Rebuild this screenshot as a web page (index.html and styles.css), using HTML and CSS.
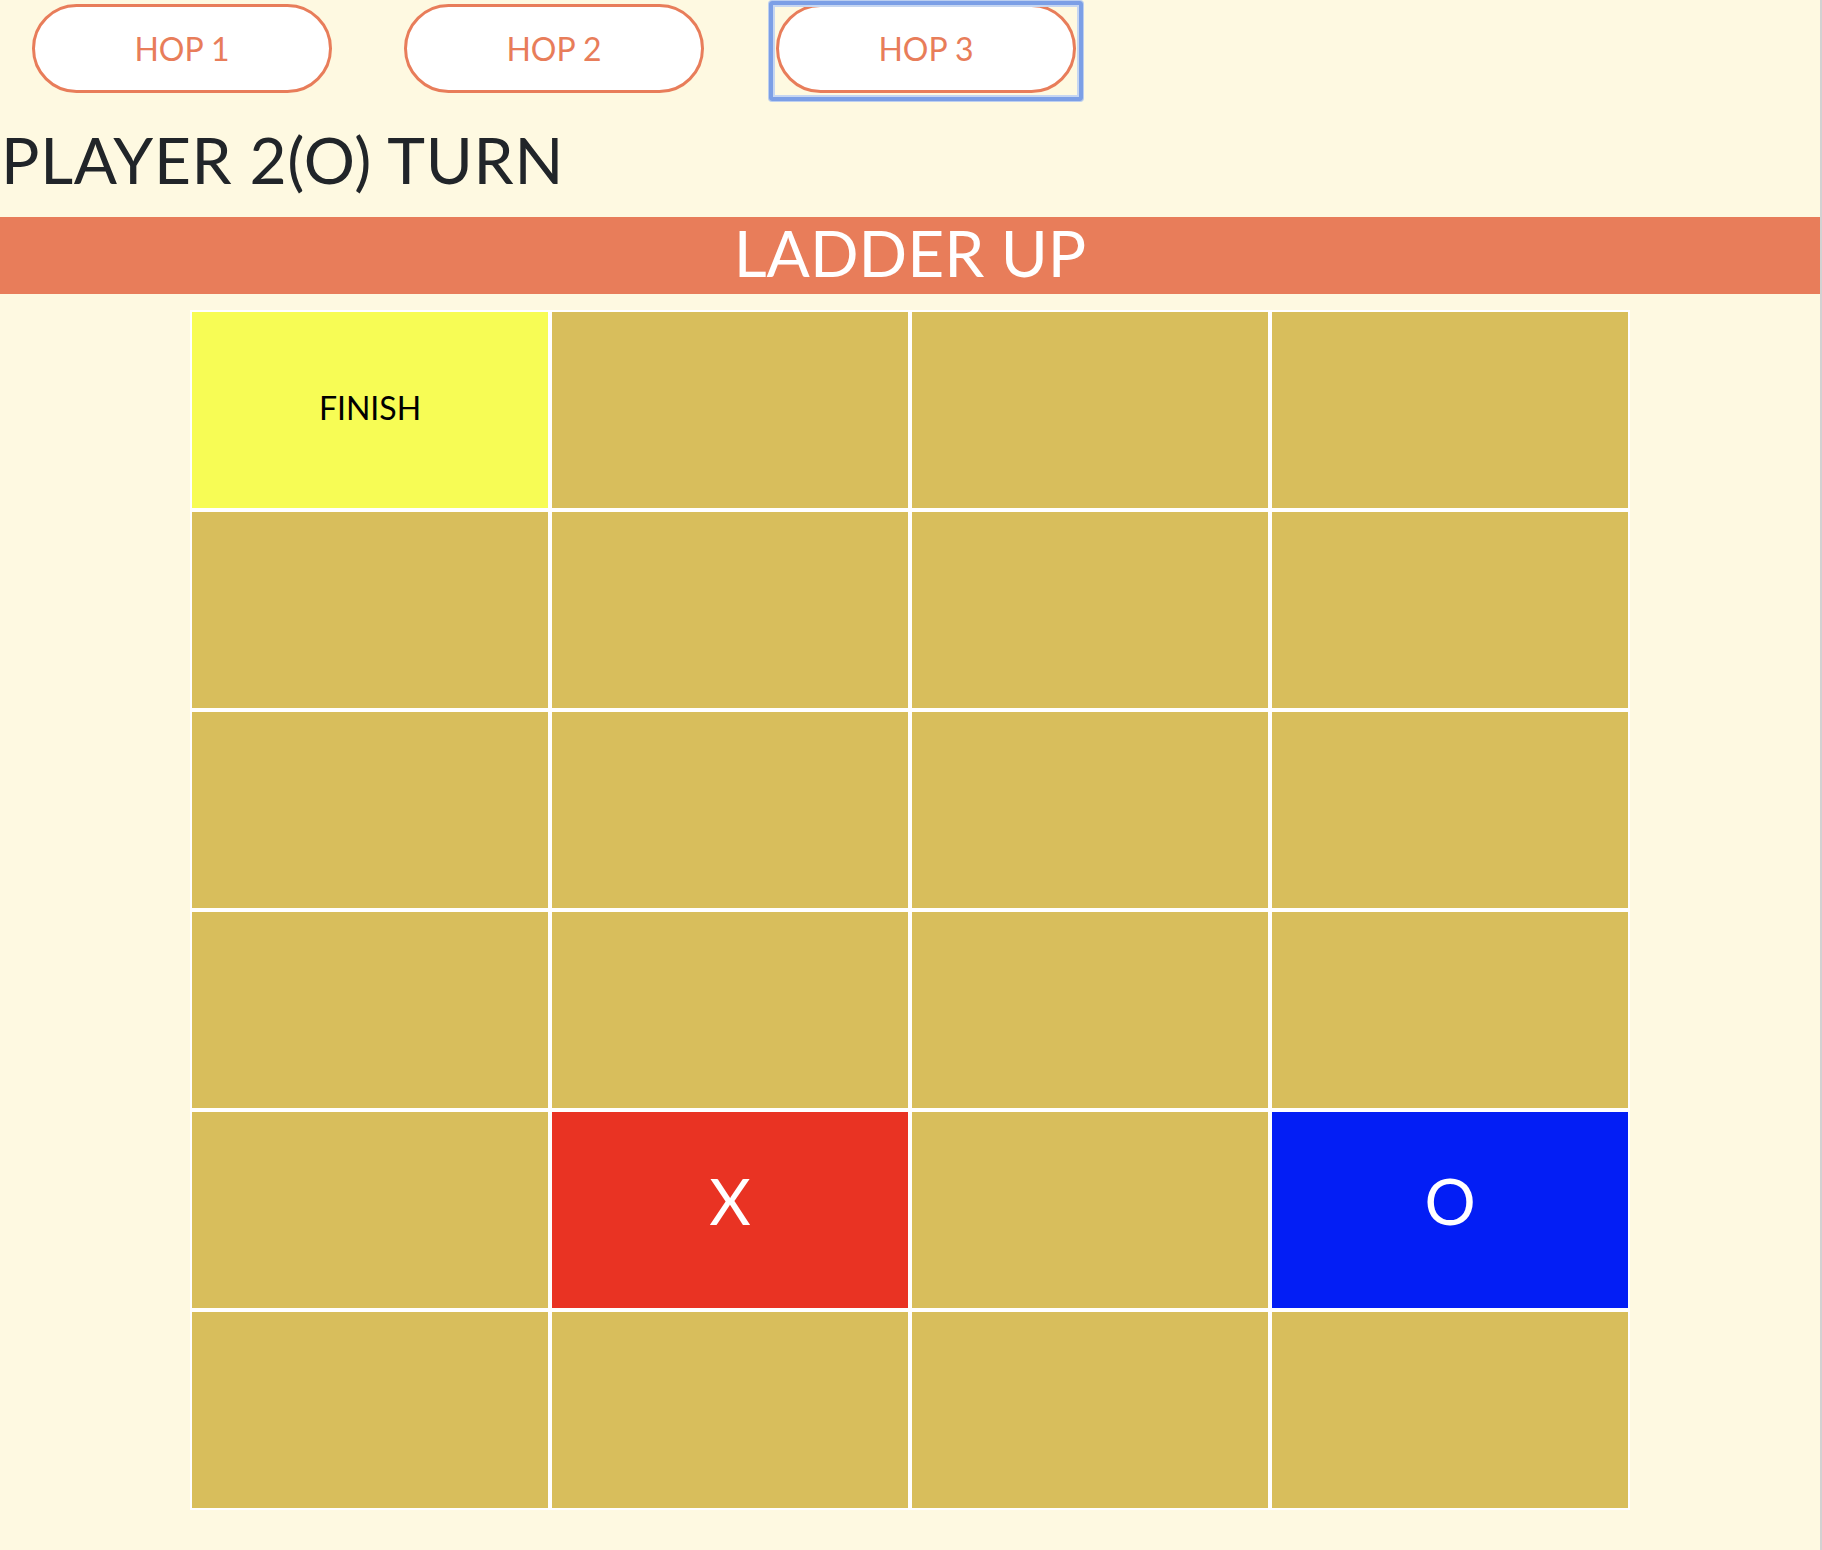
FILE: index.html
```html
<!DOCTYPE html>
<html lang="en">
<head>
<meta charset="utf-8">
<title>Ladder Up</title>
<link rel="stylesheet" href="styles.css">
</head>
<body>
<div class="page">
  <div class="hops">
    <button class="hop">HOP 1</button>
    <button class="hop">HOP 2</button>
    <button class="hop hop-focus">HOP 3</button>
  </div>
  <h1 class="turn">PLAYER 2(O) TURN</h1>
  <div class="banner">LADDER UP</div>
  <div class="board">
    <div class="cell finish">FINISH</div>
    <div class="cell"></div>
    <div class="cell"></div>
    <div class="cell"></div>
    <div class="cell"></div>
    <div class="cell"></div>
    <div class="cell"></div>
    <div class="cell"></div>
    <div class="cell"></div>
    <div class="cell"></div>
    <div class="cell"></div>
    <div class="cell"></div>
    <div class="cell"></div>
    <div class="cell"></div>
    <div class="cell"></div>
    <div class="cell"></div>
    <div class="cell"></div>
    <div class="cell player-x">X</div>
    <div class="cell"></div>
    <div class="cell player-o">O</div>
    <div class="cell"></div>
    <div class="cell"></div>
    <div class="cell"></div>
    <div class="cell"></div>
  </div>
</div>
</body>
</html>
```

FILE: styles.css
```css
html {
  background: #d2d2d2;
  margin: 0;
}

body {
  margin: 0;
  width: calc(100% - 2px);
  min-height: 1550px;
  background: #fef9e1;
  font-family: Lato, "Noto Sans", sans-serif;
  color: #212529;
}

.page {
  display: flex;
  flex-direction: column;
}

.hops {
  display: flex;
  gap: 72px;
  padding: 4px 0 0 32px;
}

.hop {
  position: relative;
  width: 300px;
  height: 89px;
  background: #ffffff;
  border: 3px solid #e87d5a;
  border-radius: 45px;
  color: #e87d5a;
  font-family: Lato, "Noto Sans", sans-serif;
  font-size: 32px;
  letter-spacing: 0;
  padding: 0;
  cursor: pointer;
}

.hop-focus::after {
  content: "";
  position: absolute;
  top: -6px;
  bottom: -11px;
  left: -10px;
  right: -10px;
  border: 4px solid #7c9fe6;
  border-radius: 3px;
  box-shadow: inset 0 0 0 2px #c6d6f1, 0 0 0 1px #bccff0;
  pointer-events: none;
}

.turn {
  margin: 29px 0 0 0;
  padding-left: 1px;
  font-size: 64px;
  font-weight: 400;
  line-height: 76.8px;
  letter-spacing: 0.7px;
}

.banner {
  margin-top: 18px;
  height: 77px;
  background: #e87d5a;
  color: #ffffff;
  font-size: 64px;
  line-height: 72px;
  text-align: center;
}

.board {
  align-self: center;
  margin-top: 16px;
  display: grid;
  grid-template-columns: repeat(4, 356px);
  grid-template-rows: repeat(6, 196px);
  gap: 4px;
  padding: 2px;
  background: #ffffff;
}

.cell {
  background: #d8be5c;
  display: flex;
  align-items: center;
  justify-content: center;
}

.finish {
  background: #f7fc55;
  color: #000000;
  font-size: 32px;
  padding-bottom: 4px;
}

.player-x {
  background: #e93323;
  color: #ffffff;
  font-size: 64px;
  padding-bottom: 18px;
}

.player-o {
  background: #031ef5;
  color: #ffffff;
  font-size: 64px;
  padding-bottom: 18px;
}
```
